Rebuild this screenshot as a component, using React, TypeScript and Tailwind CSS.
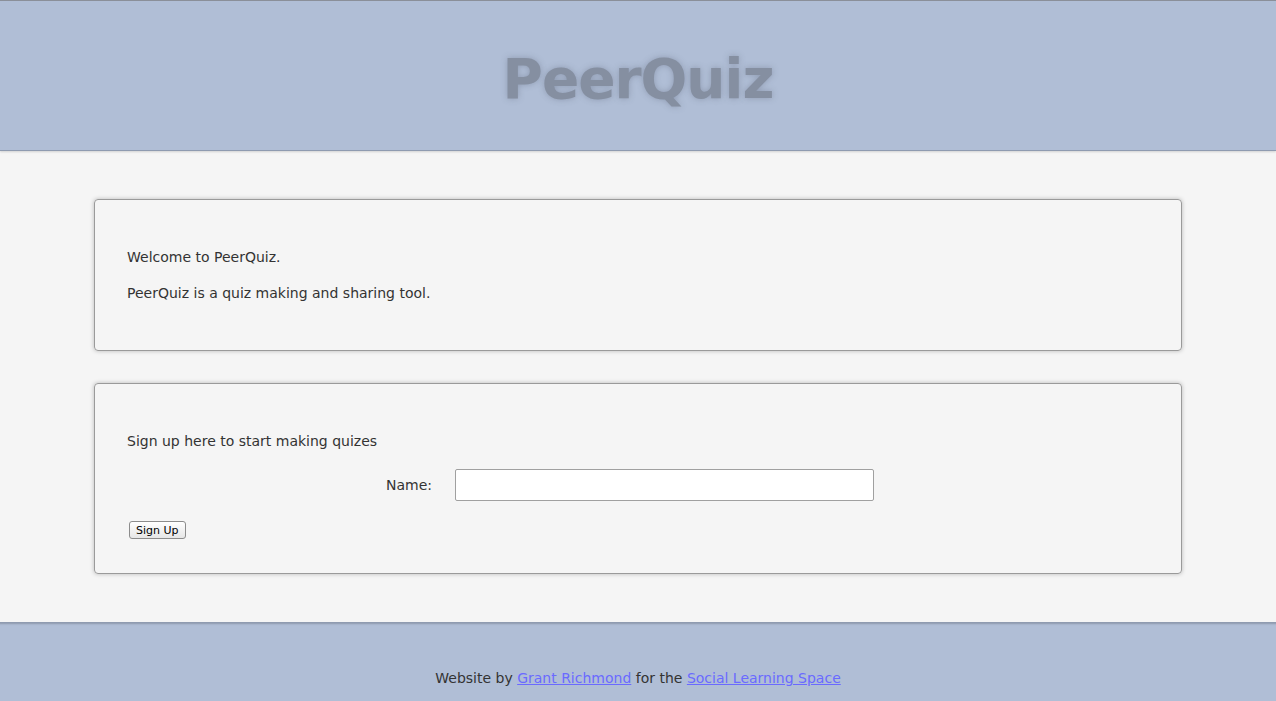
export default function App() {
  return (
    <div className="min-h-screen flex flex-col bg-[#f5f5f5] font-['DejaVu_Sans',sans-serif] text-[14px] leading-[21px] text-[#333]">
      {/* Header */}
      <header className="h-[151px] bg-[#b0bed6] border-t border-t-[#8a8f99] border-b border-b-[#8f9bb0] shadow-[0_1px_2px_rgba(0,0,0,0.15)] flex items-center justify-center">
        <h1 className="text-[55px] leading-none font-bold tracking-[-1px] text-[#858fa1] [text-shadow:0_0_6px_rgba(80,90,110,0.35)] pt-[8px]">
          PeerQuiz
        </h1>
      </header>

      {/* Main */}
      <main className="flex-1 px-[94px] pt-[48px] pb-[48px] flex flex-col gap-[32px]">
        <section className="border border-[#9a9a9a] rounded-[4px] shadow-[0_0_4px_rgba(0,0,0,0.25)] px-[32px] pt-[47px] pb-[46px]">
          <p className="mb-[15px]">Welcome to PeerQuiz.</p>
          <p>PeerQuiz is a quiz making and sharing tool.</p>
        </section>

        <section className="border border-[#9a9a9a] rounded-[4px] shadow-[0_0_4px_rgba(0,0,0,0.25)] px-[32px] pt-[47px] pb-[34px]">
          <p className="mb-[17px]">Sign up here to start making quizes</p>
          <div className="flex items-center">
            <label className="w-[328px] text-right pr-[23px]">Name:</label>
            <input
              type="text"
              className="w-[419px] h-[32px] bg-white border border-[#a0a0a0] rounded-[2px] px-2 outline-none"
            />
          </div>
          <button className="block mt-[20px] ml-[2px] h-[18px] px-[6px] text-[11px] leading-none text-black bg-gradient-to-b from-white to-[#e6e6e6] border border-[#8c8c8c] rounded-[3px]">
            Sign Up
          </button>
        </section>
      </main>

      {/* Footer */}
      <footer className="h-[79px] bg-[#b0bed6] border-t border-t-[#8f9bb0] shadow-[inset_0_3px_2px_-2px_rgba(0,0,0,0.2)] flex items-end justify-center pb-[12px]">
        <p>
          Website by{" "}
          <a href="#" className="text-[#6a6aff] underline">Grant Richmond</a>{" "}
          for the{" "}
          <a href="#" className="text-[#6a6aff] underline">Social Learning Space</a>
        </p>
      </footer>
    </div>
  );
}
